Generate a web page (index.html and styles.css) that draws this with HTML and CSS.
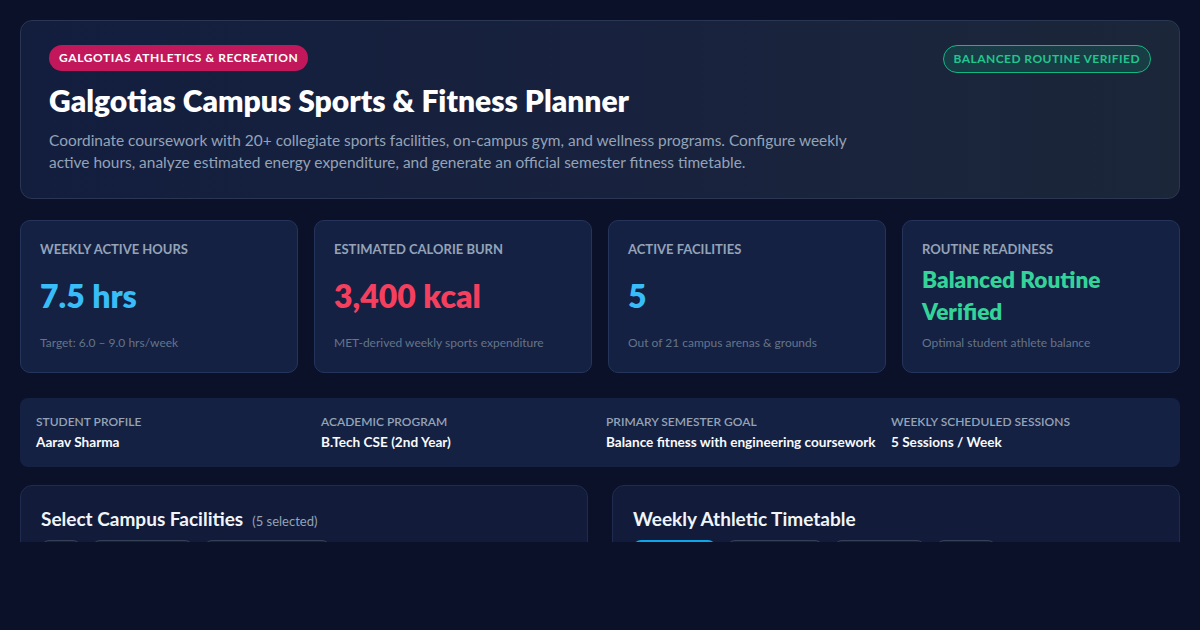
FILE: index.html
```html
<!DOCTYPE html>
<html lang="en">
<head>
<meta charset="utf-8">
<title>Galgotias Campus Sports &amp; Fitness Planner</title>
<link rel="stylesheet" href="styles.css">
</head>
<body>
<div class="page">
  <header class="hero">
    <div class="hero-top">
      <span class="badge badge-pink">Galgotias Athletics &amp; Recreation</span>
      <span class="badge badge-green">Balanced Routine Verified</span>
    </div>
    <h1 class="hero-title">Galgotias Campus Sports &amp; Fitness Planner</h1>
    <p class="hero-desc">Coordinate coursework with 20+ collegiate sports facilities, on-campus gym, and wellness programs. Configure weekly active hours, analyze estimated energy expenditure, and generate an official semester fitness timetable.</p>
  </header>

  <section class="stats">
    <div class="stat">
      <div class="stat-label">Weekly Active Hours</div>
      <div class="stat-value blue">7.5 hrs</div>
      <div class="stat-foot">Target: 6.0 – 9.0 hrs/week</div>
    </div>
    <div class="stat">
      <div class="stat-label">Estimated Calorie Burn</div>
      <div class="stat-value red">3,400 kcal</div>
      <div class="stat-foot">MET-derived weekly sports expenditure</div>
    </div>
    <div class="stat">
      <div class="stat-label">Active Facilities</div>
      <div class="stat-value blue">5</div>
      <div class="stat-foot">Out of 21 campus arenas &amp; grounds</div>
    </div>
    <div class="stat">
      <div class="stat-label">Routine Readiness</div>
      <div class="stat-value green small">Balanced Routine Verified</div>
      <div class="stat-foot">Optimal student athlete balance</div>
    </div>
  </section>

  <section class="profile">
    <div class="profile-item">
      <div class="profile-label">Student Profile</div>
      <div class="profile-value">Aarav Sharma</div>
    </div>
    <div class="profile-item">
      <div class="profile-label">Academic Program</div>
      <div class="profile-value">B.Tech CSE (2nd Year)</div>
    </div>
    <div class="profile-item">
      <div class="profile-label">Primary Semester Goal</div>
      <div class="profile-value">Balance fitness with engineering coursework</div>
    </div>
    <div class="profile-item">
      <div class="profile-label">Weekly Scheduled Sessions</div>
      <div class="profile-value">5 Sessions / Week</div>
    </div>
  </section>

  <section class="panels">
    <div class="panel">
      <h2 class="panel-title">Select Campus Facilities <span class="panel-sub">(5 selected)</span></h2>
      <div class="chips">
        <span class="chip chip-xs"></span>
        <span class="chip chip-m"></span>
        <span class="chip chip-l"></span>
      </div>
    </div>
    <div class="panel">
      <h2 class="panel-title">Weekly Athletic Timetable</h2>
      <div class="chips">
        <span class="chip chip-active chip-a"></span>
        <span class="chip chip-b"></span>
        <span class="chip chip-c"></span>
        <span class="chip chip-d"></span>
      </div>
    </div>
  </section>
</div>
</body>
</html>
```

FILE: styles.css
```css
* { box-sizing: border-box; }

html, body {
  margin: 0;
  padding: 0;
  background: #0a1128;
}

body {
  font-family: Lato, "Noto Sans", "DejaVu Sans", sans-serif;
  color: #f1f5f9;
  width: 1200px;
  height: 630px;
  overflow: hidden;
}

.page {
  padding: 20px 20px 0;
  height: 542px;
  overflow: hidden;
  display: flex;
  flex-direction: column;
}

.page > * {
  flex-shrink: 0;
}

/* HERO */
.hero {
  border: 1px solid #2a3652;
  border-radius: 12px;
  background: linear-gradient(90deg, #131e3f 0%, #18223d 55%, #1c2639 100%);
  padding: 24px 28px 24px;
  height: 179px;
}

.hero-top {
  display: flex;
  justify-content: space-between;
  align-items: flex-start;
}

.badge {
  display: inline-block;
  font-size: 12px;
  font-weight: 700;
  text-transform: uppercase;
  border-radius: 999px;
  line-height: 16px;
}

.badge-pink {
  background: #c2185b;
  color: #ffffff;
  padding: 5px 10px;
  letter-spacing: 0.6px;
}

.badge-green {
  background: rgba(16, 185, 129, 0.16);
  border: 1px solid #10b981;
  color: #22c58e;
  padding: 5px 10px;
  letter-spacing: 0.45px;
}

.hero-title {
  margin: 10px 0 0;
  font-size: 30px;
  line-height: 34px;
  font-weight: 800;
  color: #ffffff;
}

.hero-desc {
  margin: 12px 0 0;
  max-width: 815px;
  font-size: 15.45px;
  line-height: 22px;
  color: #94a3b8;
}

/* STATS */
.stats {
  margin-top: 21px;
  display: grid;
  grid-template-columns: repeat(4, 1fr);
  gap: 16px;
}

.stat {
  height: 153px;
  border: 1px solid #25345a;
  border-radius: 10px;
  background: #152142;
  padding: 20px 19px 21px;
  display: flex;
  flex-direction: column;
}

.stat-label {
  font-size: 13px;
  line-height: 16px;
  font-weight: 700;
  text-transform: uppercase;
  color: #94a3b8;
}

.stat-value {
  flex: 1;
  display: flex;
  align-items: center;
  font-size: 32px;
  line-height: 36px;
  font-weight: 800;
}

.stat-value.small {
  font-size: 22.6px;
  line-height: 32px;
}

.blue { color: #38bdf8; }
.red { color: #f43f5e; }
.green { color: #34d399; }

.stat-foot {
  font-size: 12px;
  line-height: 16px;
  color: #64748b;
}

/* PROFILE */
.profile {
  margin-top: 25px;
  display: grid;
  grid-template-columns: repeat(4, 1fr);
  gap: 12px;
  background: #152142;
  border-radius: 8px;
  padding: 16px 16px 16px;
}

.profile-label {
  font-size: 12px;
  line-height: 16px;
  font-weight: 600;
  text-transform: uppercase;
  color: #94a3b8;
}

.profile-value {
  margin-top: 3px;
  font-size: 13.6px;
  line-height: 18px;
  font-weight: 700;
  color: #f8fafc;
  white-space: nowrap;
}

/* PANELS */
.panels {
  margin-top: 18px;
  display: grid;
  grid-template-columns: 1fr 1fr;
  gap: 24px;
}

.panel {
  border: 1px solid #1f2c50;
  border-radius: 12px;
  background: #121c3a;
  padding: 21px 20px 20px;
  height: 200px;
}

.panel-title {
  margin: 0;
  display: flex;
  align-items: baseline;
  height: 24px;
  font-size: 19px;
  line-height: 24px;
  font-weight: 700;
  color: #f1f5f9;
}

.panel-sub {
  margin-left: 9px;
  font-size: 13px;
  line-height: 16px;
  font-weight: 400;
  color: #94a3b8;
}

.chips {
  margin-top: 9px;
  display: flex;
  gap: 11px;
}

.chip {
  display: block;
  height: 32px;
  border: 1px solid #334155;
  border-radius: 8px;
  background: #17223f;
}

.chip-active {
  border: 2px solid #0ea5e9;
  background: #0c4a6e;
}

.chip-xs { width: 40px; }
.chip-m { width: 101px; }
.chip-l { width: 126px; }
.chip-a { width: 83px; }
.chip-b { width: 96px; }
.chip-c { width: 91px; }
.chip-d { width: 60px; }
```
